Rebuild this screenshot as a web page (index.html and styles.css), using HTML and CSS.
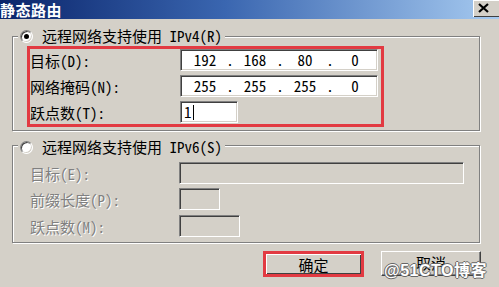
FILE: index.html
```html
<!DOCTYPE html>
<html lang="zh-CN">
  <head>
    <meta charset="UTF-8" />
    <title>静态路由</title>
    <link rel="stylesheet" href="styles.css">
  </head>
  <body>
    <div class="titlebar">
      <span class="title">静态路由</span>
      <span class="close">
        <svg width="11" height="10" viewBox="0 0 11 10"><path d="M1 1 L10 9 M10 1 L1 9" stroke="#000" stroke-width="2.2" fill="none"/></svg>
      </span>
    </div>

    <div class="dialog">
      <div class="group group-v4">
        <div class="legend"><span class="radio checked"></span>远程网络支持使用 IPv4(R)</div>
        <div class="mark">
          <div class="row">
            <span class="label">目标(D):</span>
            <span class="field ip"><span class="seg">192</span><span class="dot">.</span><span class="seg">168</span><span class="dot">.</span><span class="seg">80</span><span class="dot">.</span><span class="seg">0</span></span>
          </div>
          <div class="row">
            <span class="label">网络掩码(N):</span>
            <span class="field ip"><span class="seg">255</span><span class="dot">.</span><span class="seg">255</span><span class="dot">.</span><span class="seg">255</span><span class="dot">.</span><span class="seg">0</span></span>
          </div>
          <div class="row">
            <span class="label">跃点数(T):</span>
            <span class="field hop">1<span class="caret"></span></span>
          </div>
        </div>
      </div>

      <div class="group group-v6">
        <div class="legend"><span class="radio"></span>远程网络支持使用 IPv6(S)</div>
        <div class="rows">
          <div class="row">
            <span class="label off">目标(E):</span>
            <span class="field off wide"></span>
          </div>
          <div class="row">
            <span class="label off">前缀长度(P):</span>
            <span class="field off prefix"></span>
          </div>
          <div class="row row-last">
            <span class="label off">跃点数(M):</span>
            <span class="field off hop6"></span>
          </div>
        </div>
      </div>

      <div class="buttons">
        <button class="btn btn-ok">确定</button>
        <button class="btn btn-cancel">取消</button>
      </div>
    </div>

    <div class="watermark">@51CTO博客</div>
  </body>
</html>
```

FILE: styles.css
```css
* {
  box-sizing: border-box;
}
body {
  margin: 0;
  width: 499px;
  height: 287px;
  overflow: hidden;
  position: relative;
  background-color: #d4d0c8;
  font-family: "Noto Sans Mono CJK SC", "Noto Sans CJK SC", sans-serif;
  font-size: 15px;
  color: #000;
}
.titlebar {
  height: 19px;
  display: flex;
  justify-content: space-between;
  background: linear-gradient(to right, #0a246a, #3a66b0 45%, #a6caf0);
  overflow: hidden;
}
.title {
  color: #fff;
  font-weight: bold;
  font-size: 15px;
  line-height: 19px;
  letter-spacing: 0.5px;
}
.close {
  width: 26px;
  height: 17px;
  padding: 3px 0 0 5px;
  background: #d4d0c8;
  box-shadow: inset 1px 1px #fff, inset 0 -1px #404040;
}
.close svg {
  display: block;
}
.dialog {
  padding: 17px 0 0 12px;
}
.group {
  position: relative;
  width: 468px;
  border: 1px solid #808080;
  box-shadow: inset 1px 1px #fff, 1px 1px #fff;
}
.group-v4 {
  height: 95px;
}
.group-v6 {
  height: 98px;
  margin-top: 14px;
}
.legend {
  position: absolute;
  top: -10px;
  left: 5px;
  height: 18px;
  padding: 0 3px 0 2px;
  display: flex;
  align-items: center;
  line-height: 18px;
  background: #d4d0c8;
  white-space: nowrap;
}
.group-v6 .legend {
  top: -8px;
}
.radio {
  position: relative;
  width: 13px;
  height: 13px;
  margin-right: 9px;
  border-radius: 50%;
  background: #fff;
  border: 1px solid;
  border-color: #808080 #fff #fff #808080;
  box-shadow: inset 1px 1px #404040, inset -1px -1px #d4d0c8;
}
.radio.checked::after {
  content: "";
  position: absolute;
  left: 3px;
  top: 3px;
  width: 5px;
  height: 5px;
  border-radius: 50%;
  background: #000;
}
.mark {
  width: 357px;
  margin: 9px 0 0 14px;
  padding-bottom: 1px;
  border: 3px solid #e23a42;
  display: flex;
  flex-direction: column;
  gap: 4px;
}
.row {
  display: flex;
  align-items: center;
  height: 22px;
}
.label {
  width: 150px;
  white-space: nowrap;
}
.label.off {
  width: 149px;
  color: #808080;
  text-shadow: 1px 1px #fff;
}
.field {
  height: 22px;
  background: #fff;
  border: 1px solid;
  border-color: #808080 #fff #fff #808080;
  box-shadow: inset 1px 1px #404040, inset -1px -1px #d4d0c8;
  line-height: 20px;
}
.ip {
  width: 198px;
  display: flex;
  padding-left: 3px;
}
.seg {
  width: 42px;
  text-align: center;
}
.dot {
  width: 8px;
  text-align: center;
}
.hop {
  width: 58px;
  padding-left: 3px;
  display: flex;
  align-items: center;
}
.caret {
  width: 1px;
  height: 15px;
  margin-left: 1px;
  background: #000;
}
.rows {
  padding: 16px 0 0 17px;
  display: flex;
  flex-direction: column;
  gap: 4px;
}
.row-last {
  margin-top: 1px;
}
.field.off {
  background: #d4d0c8;
}
.wide {
  width: 285px;
}
.prefix {
  width: 41px;
}
.hop6 {
  width: 61px;
}
.buttons {
  display: flex;
  justify-content: flex-end;
  gap: 17px;
  margin-top: 8px;
  padding-right: 18px;
}
.btn {
  width: 100px;
  height: 25px;
  padding: 0;
  font-family: inherit;
  font-size: 15px;
  line-height: 21px;
  color: #000;
  background: #d4d0c8;
  border: 1px solid;
  border-color: #fff #404040 #404040 #fff;
  box-shadow: inset -1px -1px #808080;
}
.btn-cancel {
  padding-bottom: 3px;
}
.btn-ok {
  width: 101px;
  height: 26px;
  border: 3px solid #e23a42;
  box-shadow: inset 1px 1px #fff, inset -1px -1px #404040;
}
.watermark {
  position: absolute;
  right: 12px;
  bottom: 6px;
  font-family: "Liberation Sans", "Noto Sans CJK SC", sans-serif;
  font-size: 16px;
  font-weight: bold;
  color: #fff;
  text-shadow: 1px 0 #666, -1px 0 #666, 0 1px #666, 0 -1px #666;
  letter-spacing: 0.5px;
}
```
